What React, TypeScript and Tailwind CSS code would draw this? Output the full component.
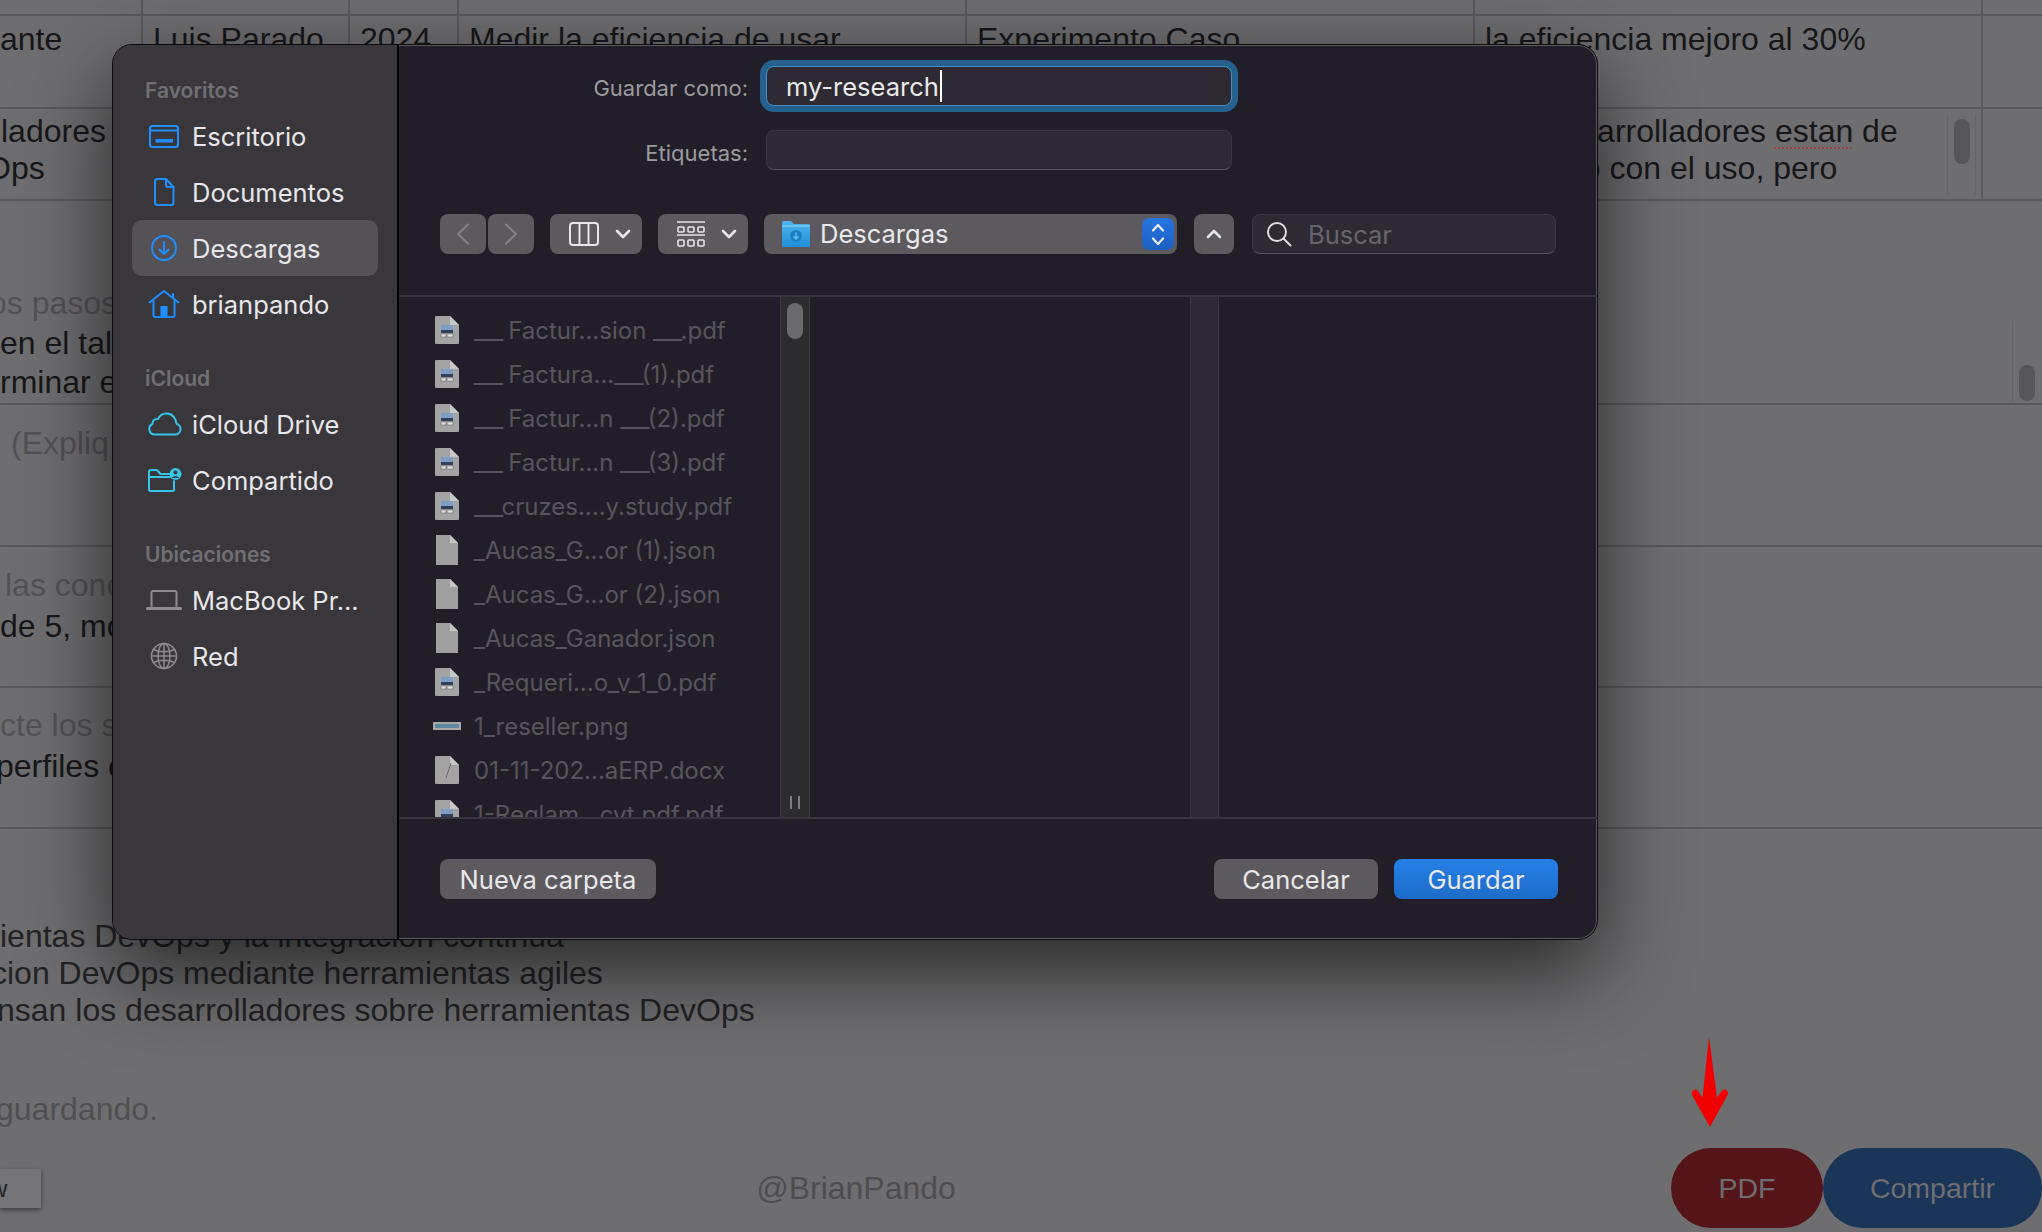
const files = [
  { name: '___ Factur...sion ___.pdf', kind: 'pdf' },
  { name: '___ Factura...___(1).pdf', kind: 'pdf' },
  { name: '___ Factur...n ___(2).pdf', kind: 'pdf' },
  { name: '___ Factur...n ___(3).pdf', kind: 'pdf' },
  { name: '___cruzes....y.study.pdf', kind: 'pdf' },
  { name: '_Aucas_G...or (1).json', kind: 'blank' },
  { name: '_Aucas_G...or (2).json', kind: 'blank' },
  { name: '_Aucas_Ganador.json', kind: 'blank' },
  { name: '_Requeri...o_v_1_0.pdf', kind: 'pdf' },
  { name: '1_reseller.png', kind: 'png' },
  { name: '01-11-202...aERP.docx', kind: 'doc' },
  { name: '1-Reglam...cyt.pdf.pdf', kind: 'pdf' },
];

function FileIcon({ kind }: { kind: string }) {
  if (kind === 'png') {
    return (
      <svg width="28" height="8" viewBox="0 0 28 8">
        <rect width="28" height="8" fill="#a9a9a9" />
        <rect x="2" y="2" width="24" height="4" fill="#5b8aa0" />
      </svg>
    );
  }
  if (kind === 'blank') {
    return (
      <svg width="22" height="30" viewBox="0 0 22 30">
        <path d="M0 0h14l8 8v22H0z" fill="#a0a0a0" />
        <path d="M14 0l8 8h-8z" fill="#c6c6c6" />
      </svg>
    );
  }
  return (
    <svg width="24" height="28" viewBox="0 0 24 28">
      <path d="M1 0h14l9 9v18a1 1 0 0 1-1 1H1a1 1 0 0 1-1-1V1a1 1 0 0 1 1-1z" fill="#a3a3a3" />
      <path d="M15 0l9 9h-9z" fill="#c8c8c8" />
      {kind === 'pdf' ? (
        <>
          <rect x="6" y="9" width="12" height="5" fill="#7f9cc4" />
          <rect x="6" y="14" width="12" height="3" fill="#2f3f5c" />
          <rect x="6" y="18" width="5" height="3" fill="#e2e2e2" stroke="#555" strokeWidth="0.5" />
          <rect x="12" y="18" width="6" height="3" fill="#e2e2e2" stroke="#555" strokeWidth="0.5" />
        </>
      ) : (
        <>
          <path d="M4 12h14M4 15h14M4 18h14M4 21h14" stroke="#b59c9c" strokeWidth="0.6" />
          <path d="M16 7l-5 15" stroke="#6b6b6b" strokeWidth="1" />
        </>
      )}
    </svg>
  );
}

// the triple underscores in the file names run a bit tighter in the picture
function FileName({ name }: { name: string }) {
  return (
    <span className="whitespace-nowrap">
      {name.split(/(___)/).map((part, idx) =>
        part === '___' ? (
          <span key={idx} className="tracking-[-1.8px]">{part}</span>
        ) : (
          <span key={idx}>{part}</span>
        ),
      )}
    </span>
  );
}

const blue = '#1f8fff';
const cyan = '#35c5e8';
const grey = '#8c8b8e';

function SideIcon({ name }: { name: string }) {
  const base = { fill: 'none', strokeWidth: 2, strokeLinecap: 'round', strokeLinejoin: 'round' } as const;
  switch (name) {
    case 'desktop':
      return (
        <svg width="38" height="28" viewBox="0 0 38 28" {...base} stroke={blue}>
          <rect x="5" y="4" width="28" height="21" rx="2.5" />
          <path d="M5 8.5h28" />
          <rect x="10.5" y="17" width="17.5" height="3.5" fill={blue} stroke="none" />
        </svg>
      );
    case 'doc':
      return (
        <svg width="38" height="30" viewBox="0 0 38 30" {...base} stroke={blue}>
          <path d="M12 2h9l7.5 8v16a2 2 0 0 1-2 2H12a2 2 0 0 1-2-2V4a2 2 0 0 1 2-2z" />
          <path d="M21 2v6a2 2 0 0 0 2 2h5.5" />
        </svg>
      );
    case 'download':
      return (
        <svg width="38" height="28" viewBox="0 0 38 28" {...base} stroke={blue}>
          <circle cx="19" cy="14" r="12" />
          <path d="M19 8v12M14.5 15.5L19 20l4.5-4.5" />
        </svg>
      );
    case 'home':
      return (
        <svg width="38" height="30" viewBox="0 0 38 30" {...base} stroke={blue}>
          <path d="M4.5 13.5L19 2l14.5 11.5M28 5v4" />
          <path d="M8.5 12v14.5a1.5 1.5 0 0 0 1.5 1.5h18a1.5 1.5 0 0 0 1.5-1.5V12" />
          <rect x="15.5" y="17" width="7" height="11" fill={blue} stroke="none" />
        </svg>
      );
    case 'cloud':
      return (
        <svg width="38" height="26" viewBox="0 0 38 26" {...base} stroke={cyan}>
          <path d="M10 23.5h20a5.5 5.5 0 0 0 1.5-10.8C31 7 27 2.5 21.5 2.5c-4 0-7 2.3-8.5 5.5C8.5 7.5 7.5 10.5 7.5 13A5.5 5.5 0 0 0 10 23.5z" />
        </svg>
      );
    case 'shared':
      return (
        <svg width="38" height="26" viewBox="0 0 38 26" {...base} stroke={cyan}>
          <path d="M29 14v8.5a1.5 1.5 0 0 1-1.5 1.5H5.5A1.5 1.5 0 0 1 4 22.5V4.500A1.5 1.5 0 0 1 5.5 3H12l3.5 4H25" />
          <path d="M4 10h21" />
          <circle cx="30.5" cy="7" r="6" fill={cyan} stroke="none" />
          <circle cx="30.5" cy="5.5" r="2" fill="#39373c" stroke="none" />
          <path d="M27 11c.5-2.5 6.5-2.5 7 0z" fill="#39373c" stroke="none" />
        </svg>
      );
    case 'laptop':
      return (
        <svg width="38" height="22" viewBox="0 0 38 22" {...base} stroke={grey}>
          <path d="M6.5 18V3.5A1.5 1.5 0 0 1 8 2h22a1.5 1.5 0 0 1 1.5 1.5V18" />
          <rect x="1" y="18" width="36" height="3" rx="1" fill={grey} stroke="none" />
        </svg>
      );
    default:
      return (
        <svg width="38" height="28" viewBox="0 0 38 28" {...base} stroke={grey} strokeWidth={1.5}>
          <circle cx="19" cy="14" r="12.5" />
          <ellipse cx="19" cy="14" rx="6" ry="12.5" />
          <path d="M19 1.5v25M6.5 14h25M8.5 7.5c6 3 15 3 21 0M8.5 20.5c6-3 15-3 21 0" />
        </svg>
      );
  }
}

function SideSection({ title, className, items }: { title: string; className: string; items: { icon: string; label: string; active?: boolean }[] }) {
  return (
    <div className={className}>
      <div className="h-[24px] pl-[32px] text-[21px] leading-[24px] font-semibold text-[#706f73]">{title}</div>
      <div className="mt-[5px] flex flex-col">
        {items.map((item) => (
          <div
            key={item.label}
            className={
              item.active
                ? 'mx-[19px] flex h-[56px] items-center gap-[8px] rounded-[10px] bg-[#545257] pl-[12px] text-[25.5px] text-[#e8e7e9]'
                : 'mx-[19px] flex h-[56px] items-center gap-[8px] pl-[12px] text-[25.5px] text-[#e8e7e9]'
            }
          >
            <span className="flex w-[40px] shrink-0 justify-center">
              <SideIcon name={item.icon} />
            </span>
            {item.label}
          </div>
        ))}
      </div>
    </div>
  );
}

function Chevron({ dir }: { dir: 'down' | 'up' }) {
  return (
    <svg width="16" height="10" viewBox="0 0 16 10" fill="none" stroke="#e6e5e8" strokeWidth="2.6" strokeLinecap="round" strokeLinejoin="round">
      <path d={dir === 'down' ? 'M2 2l6 6 6-6' : 'M2 8l6-6 6 6'} />
    </svg>
  );
}

function Dialog() {
  return (
    <div className="absolute left-[112px] top-[44px] flex h-[896px] w-[1486px] overflow-hidden rounded-[20px] border border-[#0c0c0e] bg-[#221e29] font-['Inter',sans-serif] shadow-[0_30px_85px_rgba(0,0,0,0.65),inset_0_0_0_1px_#5b595f]">
      <aside className="w-[286px] shrink-0 border-r-2 border-black bg-[#39373c] pt-[34px]">
        <SideSection
          title="Favoritos"
          className=""
          items={[
            { icon: 'desktop', label: 'Escritorio' },
            { icon: 'doc', label: 'Documentos' },
            { icon: 'download', label: 'Descargas', active: true },
            { icon: 'home', label: 'brianpando' },
          ]}
        />
        <SideSection
          title="iCloud"
          className="mt-[35px]"
          items={[
            { icon: 'cloud', label: 'iCloud Drive' },
            { icon: 'shared', label: 'Compartido' },
          ]}
        />
        <SideSection
          title="Ubicaciones"
          className="mt-[35px]"
          items={[
            { icon: 'laptop', label: 'MacBook Pr...' },
            { icon: 'globe', label: 'Red' },
          ]}
        />
      </aside>

      <main className="flex min-w-0 flex-1 flex-col">
        <div className="h-[252px] shrink-0 border-b-2 border-[#38353e] pt-[21px]">
          <div className="flex items-center">
            <label className="w-[349px] pt-[4px] text-right text-[22px] leading-[30px] text-[#9b9a9e]">Guardar como:</label>
            <div className="ml-[18px] flex h-[40px] w-[466px] items-center rounded-[8px] border border-[#4a8ec4] bg-[#2e2a33] pl-[19px] text-[25.5px] text-[#e9e8ea] shadow-[0_0_0_6px_#25618f]">
              my-research
              <span className="ml-[1px] h-[32px] w-[2px] bg-white" />
            </div>
          </div>
          <div className="mt-[24px] flex items-center">
            <label className="w-[349px] pt-[6px] text-right text-[22px] leading-[30px] text-[#9b9a9e]">Etiquetas:</label>
            <div className="ml-[18px] h-[40px] w-[466px] rounded-[8px] border border-[#3a3740] border-b-[#56535b] bg-[#2e2a33]" />
          </div>
          <div className="mt-[44px] flex h-[40px] items-center pl-[41px]">
            <div className="flex gap-[2px]">
              <button className="flex h-[40px] w-[46px] items-center justify-center rounded-[8px] bg-[#5c5a5f]">
                <svg width="14" height="22" viewBox="0 0 14 22" fill="none" stroke="#838285" strokeWidth="2" strokeLinecap="round" strokeLinejoin="round"><path d="M12 1.5L2 11l10 9.5" /></svg>
              </button>
              <button className="flex h-[40px] w-[46px] items-center justify-center rounded-[8px] bg-[#5c5a5f]">
                <svg width="14" height="22" viewBox="0 0 14 22" fill="none" stroke="#838285" strokeWidth="2" strokeLinecap="round" strokeLinejoin="round"><path d="M2 1.5L12 11 2 20.5" /></svg>
              </button>
            </div>
            <button className="ml-[16px] flex h-[40px] w-[92px] items-center gap-[16px] rounded-[8px] bg-[#5c5a5f] pl-[19px]">
              <svg width="30" height="24" viewBox="0 0 30 24" fill="none" stroke="#e6e5e8" strokeWidth="2"><rect x="1" y="1" width="28" height="22" rx="3" /><path d="M10.5 1v22M19.5 1v22" /></svg>
              <Chevron dir="down" />
            </button>
            <button className="ml-[16px] flex h-[40px] w-[90px] items-center gap-[16px] rounded-[8px] bg-[#5c5a5f] pl-[19px]">
              <svg width="28" height="27" viewBox="0 0 28 27" fill="none" stroke="#e6e5e8"><path d="M0 1h28M0 14h28" strokeWidth="1.6" /><g strokeWidth="1.6"><rect x="1" y="6" width="6" height="5" rx="1" /><rect x="11" y="6" width="6" height="5" rx="1" /><rect x="21" y="6" width="6" height="5" rx="1" /><rect x="1" y="19" width="6" height="6" rx="1" /><rect x="11" y="19" width="6" height="6" rx="1" /><rect x="21" y="19" width="6" height="6" rx="1" /></g></svg>
              <Chevron dir="down" />
            </button>
            <div className="ml-[16px] flex h-[40px] w-[413px] items-center rounded-[8px] bg-[#5c5a5f] pl-[18px] pr-[3px] text-[25.5px] text-[#e9e8ea]">
              <svg width="28" height="26" viewBox="0 0 28 26">
                <defs>
                  <linearGradient id="folderBlue" x1="0" y1="0" x2="0" y2="1">
                    <stop offset="0" stopColor="#4fb6ee" />
                    <stop offset="1" stopColor="#1e8fd8" />
                  </linearGradient>
                </defs>
                <path d="M0 2a2 2 0 0 1 2-2h7l3 3h14a2 2 0 0 1 2 2v19a2 2 0 0 1-2 2H2a2 2 0 0 1-2-2z" fill="url(#folderBlue)" />
                <path d="M0 5h28" stroke="#8ed4f7" strokeWidth="1" />
                <circle cx="14" cy="15" r="6" fill="#1c7fc4" />
                <path d="M14 11.5v6M11.5 15.5l2.5 2.5 2.5-2.5" fill="none" stroke="#63c0ef" strokeWidth="1.4" />
              </svg>
              <span className="ml-[10px] pb-[2px]">Descargas</span>
              <span className="ml-auto flex h-[32px] w-[32px] flex-col items-center justify-center gap-[5px] rounded-[7px] bg-gradient-to-b from-[#2675e0] to-[#1c5fc0]">
                <svg width="14" height="9" viewBox="0 0 14 9" fill="none" stroke="#e8eef8" strokeWidth="2.2" strokeLinecap="round" strokeLinejoin="round"><path d="M2 7.5l5-5.5 5 5.5" /></svg>
                <svg width="14" height="9" viewBox="0 0 14 9" fill="none" stroke="#e8eef8" strokeWidth="2.2" strokeLinecap="round" strokeLinejoin="round"><path d="M2 1.5l5 5.5 5-5.5" /></svg>
              </span>
            </div>
            <button className="ml-[17px] flex h-[40px] w-[40px] items-center justify-center rounded-[8px] bg-[#5c5a5f]">
              <Chevron dir="up" />
            </button>
            <div className="ml-[18px] flex h-[40px] w-[304px] items-center rounded-[8px] border border-[#3a3740] border-b-[#56535b] bg-[#2e2a33] pl-[13px] text-[25.5px] text-[#67656b]">
              <svg width="26" height="26" viewBox="0 0 26 26" fill="none" stroke="#dedde0" strokeWidth="2" strokeLinecap="round"><circle cx="11" cy="11" r="9" /><path d="M17.5 17.5L24.5 24.5" /></svg>
              <span className="ml-[16px]">Buscar</span>
            </div>
          </div>
        </div>

        <div className="flex min-h-0 flex-1">
          <div className="h-full w-[381px] shrink-0 overflow-hidden pt-[11px]">
            {files.map((file) => (
              <div key={file.name} className="flex h-[44px] items-center text-[24px] text-[#57555b]">
                <span className="flex w-[75px] shrink-0 justify-center pl-[22px] pr-[2px]">
                  <FileIcon kind={file.kind} />
                </span>
                <FileName name={file.name} />
              </div>
            ))}
          </div>
          <div className="flex w-[30px] shrink-0 flex-col items-center justify-between border-x border-[#3a3a3c] bg-[#2c2c2e] pb-[8px] pt-[6px]">
            <div className="h-[36px] w-[16px] rounded-full bg-[#6b6b6d]" />
            <div className="flex gap-[6px]">
              <span className="h-[13px] w-[2px] bg-[#7f7f82]" />
              <span className="h-[13px] w-[2px] bg-[#7f7f82]" />
            </div>
          </div>
          <div className="w-[380px] shrink-0" />
          <div className="w-[29px] shrink-0 border-x border-[#38353e] bg-[#2e2a33]" />
          <div className="flex-1" />
        </div>

        <div className="flex h-[122px] shrink-0 items-start justify-between border-t-2 border-[#38353e] pl-[41px] pr-[39px] pt-[40px] text-[25.5px] text-[#e9e8ea]">
          <button className="h-[40px] w-[216px] rounded-[8px] bg-[#5c5a5f]">Nueva carpeta</button>
          <div className="flex gap-[16px]">
            <button className="h-[40px] w-[164px] rounded-[8px] bg-[#5c5a5f]">Cancelar</button>
            <button className="h-[40px] w-[164px] rounded-[8px] bg-gradient-to-b from-[#2680e6] to-[#1d6bc9]">Guardar</button>
          </div>
        </div>
      </main>
    </div>
  );
}

const cell = 'border-r-2 border-[#59595b] pl-[10px]';

export default function App() {
  return (
    <div className="relative flex h-[1232px] w-[2042px] flex-col overflow-hidden bg-[#6e6e70] font-['Liberation_Sans',Arial,sans-serif] text-[32px] leading-[37px] text-[#17171a]">
      <div className="grid grid-cols-[143px_207px_109px_508px_508px_508px_1fr] border-b-2 border-[#59595b]">
        <div className={`${cell} h-[14px]`} />
        <div className={cell} />
        <div className={cell} />
        <div className={cell} />
        <div className={cell} />
        <div className={cell} />
        <div />
      </div>
      <div className="grid h-[93px] grid-cols-[143px_207px_109px_508px_508px_508px_1fr] border-b-2 border-[#59595b]">
        <div className="border-r-2 border-[#59595b] pt-[5px]">ante</div>
        <div className={`${cell} pt-[5px]`}>Luis Parado</div>
        <div className={`${cell} pt-[5px]`}>2024</div>
        <div className={`${cell} pt-[5px]`}>Medir la eficiencia de usar</div>
        <div className={`${cell} pt-[5px]`}>Experimento Caso</div>
        <div className={`${cell} pt-[5px]`}>la eficiencia mejoro al 30%</div>
        <div />
      </div>
      <div className="grid h-[92px] grid-cols-[143px_207px_109px_508px_508px_508px_1fr] border-b-2 border-[#59595b]">
        <div className="border-r-2 border-[#59595b] pl-[1px] pt-[4px]">ladores<br /><span className="-ml-[15px]">Ops</span></div>
        <div className={cell} />
        <div className={cell} />
        <div className={cell} />
        <div className={cell} />
        <div className={`${cell} flex justify-between pr-[5px] pt-[4px]`}>
          <div className="whitespace-nowrap">
            Los desarrolladores <span className="underline decoration-dotted decoration-[#9c3d40] decoration-2 underline-offset-[5px]">estan</span> de
            <br />
            acuerdo con el uso, pero
          </div>
          <div className="mt-[1px] flex h-[80px] w-[29px] shrink-0 justify-center border-x border-[#646466] pt-[5px]">
            <div className="h-[45px] w-[16px] rounded-full bg-[#565658]" />
          </div>
        </div>
        <div />
      </div>

      <section className="flex h-[204px] border-b-2 border-[#59595b] pt-[83px] leading-[39px]">
        <div>
          <div className="-ml-[11px] text-[#525254]">os pasos</div>
          <div className="mt-[1px]">en el tall</div>
          <div>rminar e</div>
        </div>
        <div className="ml-auto mr-[1px] mt-[37px] flex h-[82px] w-[29px] items-end justify-center border-l border-[#646466] pb-[2px]">
          <div className="h-[36px] w-[16px] rounded-full bg-[#565658]" />
        </div>
      </section>
      <section className="h-[142px] border-b-2 border-[#59595b] pl-[11px] pt-[20px] text-[#525254]">(Expliq</section>
      <section className="h-[141px] border-b-2 border-[#59595b] pt-[18px] leading-[41px]">
        <div className="pl-[5px] text-[#525254]">las conc</div>
        <div>de 5, mo</div>
      </section>
      <section className="h-[141px] border-b-2 border-[#59595b] pt-[17px] leading-[41px]">
        <div className="text-[#525254]">cte los s</div>
        <div className="-ml-[4px]">perfiles c</div>
      </section>

      <div className="pt-[89px] text-[#232325]">
        <div>ientas DevOps y la integracion continua</div>
        <div className="-ml-[9px]">cion DevOps mediante herramientas agiles</div>
        <div className="-ml-[3px]">nsan los desarrolladores sobre herramientas DevOps</div>
      </div>
      <div className="-ml-[4px] mt-[62px] text-[#505052]">guardando.</div>

      <div className="mt-[20px] flex h-[80px] items-center justify-between">
        <div className="flex h-[39px] w-[41px] items-center overflow-hidden bg-[#747476] text-[24px] text-[#222] shadow-[0_2px_5px_rgba(0,0,0,0.45)]">
          <span className="-ml-[10px]">w</span>
        </div>
        <div className="text-[#4d4d4f]">@BrianPando</div>
        <div className="flex text-[28.5px]">
          <button className="h-[80px] w-[152px] rounded-full bg-[#551418] text-[#6e6e70]">PDF</button>
          <button className="h-[80px] w-[219px] rounded-full bg-[#1a3558] text-[#6e6e70]">Compartir</button>
        </div>
      </div>

      <svg className="absolute left-[1680px] top-[1030px]" width="60" height="104" viewBox="1680 1030 60 104">
        <path d="M1709 1037L1717 1098L1721.5 1091Q1725 1087 1728 1092Q1728.5 1094 1727 1096L1710 1127L1692.5 1096Q1691 1093 1692.5 1091Q1695 1088 1698 1091L1702.5 1098Z" fill="#f00000" />
      </svg>

      <Dialog />
    </div>
  );
}
